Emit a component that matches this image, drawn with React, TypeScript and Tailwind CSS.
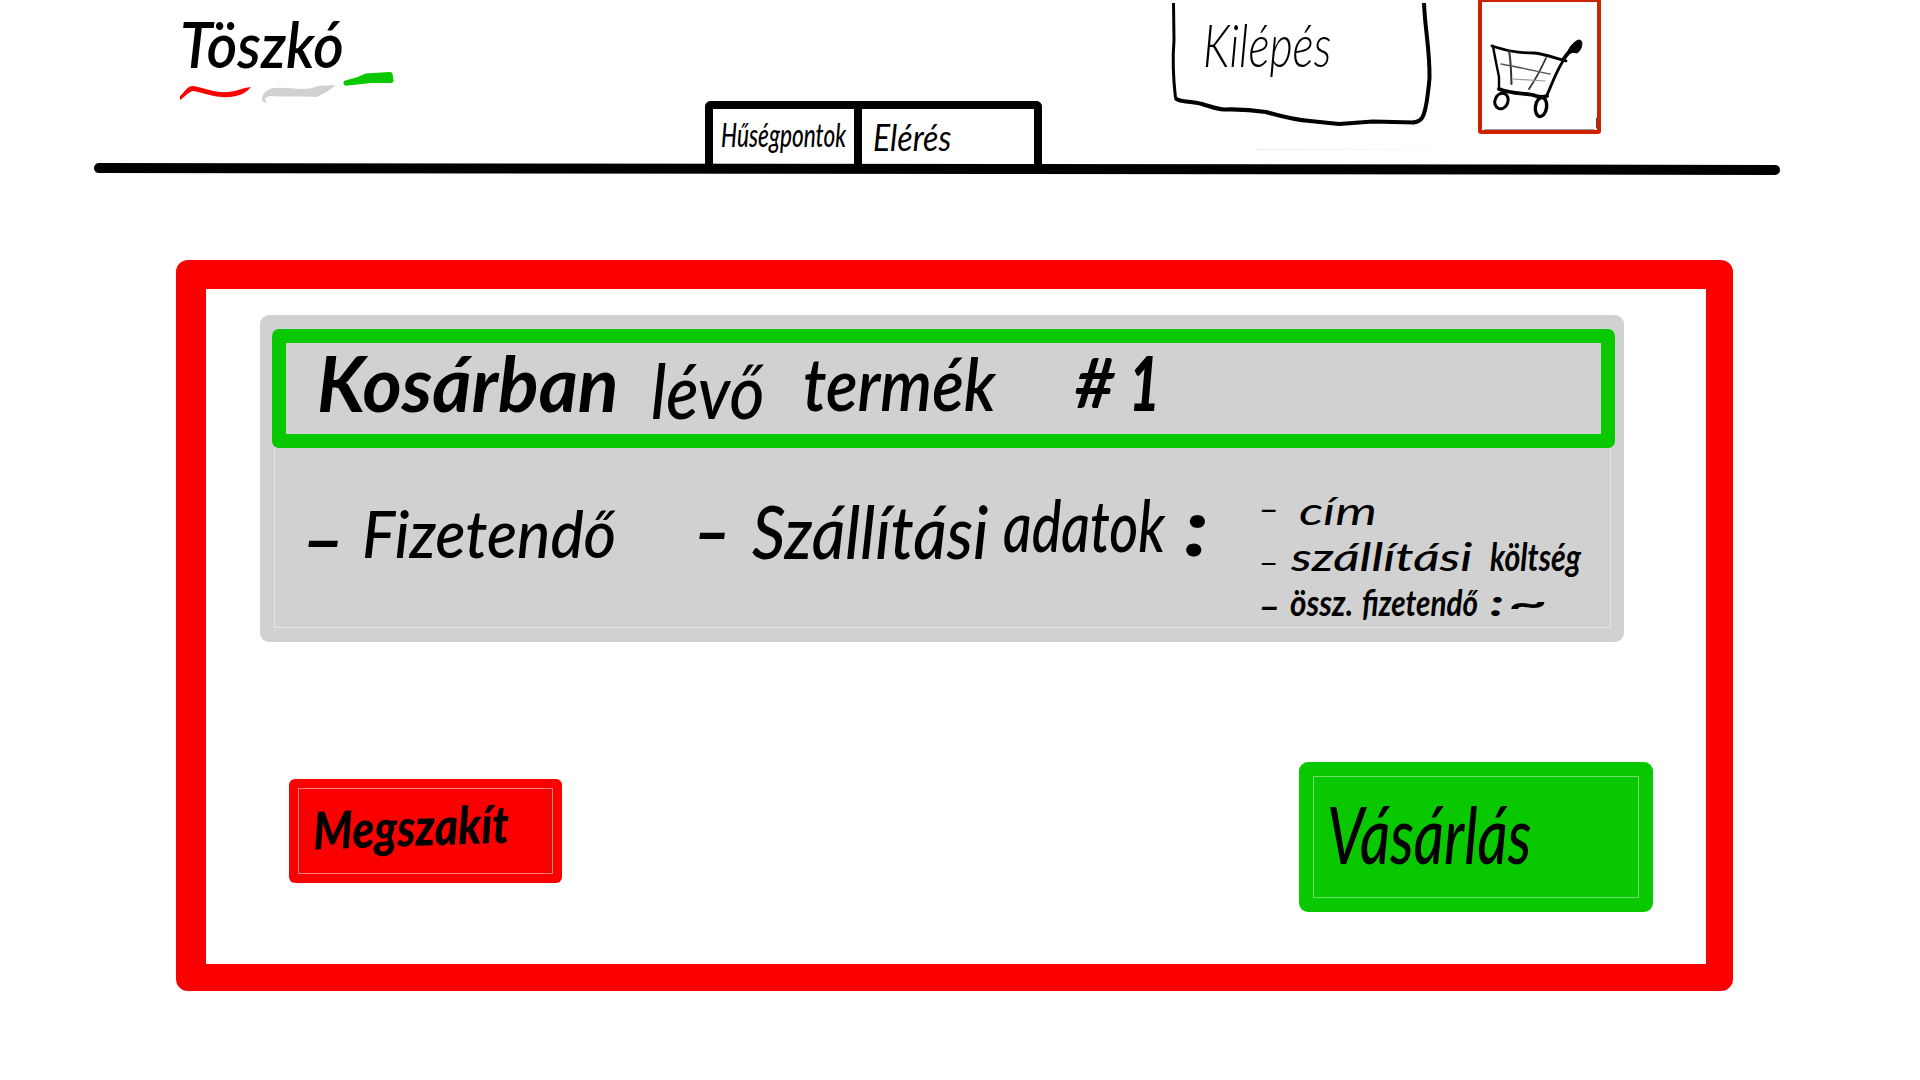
import { useLayoutEffect, useRef, useState } from "react";

/** One inked word, stretched horizontally to fill the width of its slot. */
function Ink({ text, className }: { text: string; className: string }) {
  const slot = useRef<HTMLSpanElement>(null);
  const word = useRef<HTMLSpanElement>(null);
  const [scale, setScale] = useState(1);
  useLayoutEffect(() => {
    if (slot.current && word.current) {
      setScale(slot.current.clientWidth / word.current.offsetWidth);
    }
  }, [text]);
  return (
    <span ref={slot} className={`flex shrink-0 items-start justify-start leading-none whitespace-nowrap ${className}`}>
      <span ref={word} className="block shrink-0 origin-left" style={{ transform: `scaleX(${scale})` }}>
        {text}
      </span>
    </span>
  );
}

function Logo() {
  return (
    <div className="ml-[180px] flex w-[220px] shrink-0 flex-col pt-[12px]">
      <Ink text="Töszkó" className="h-[60px] w-[164px] text-[64px] font-semibold" />
      <svg className="h-[34px] w-[220px]" viewBox="180 72 220 34" fill="none">
        <path d="M180 96 C185 92 187 86 193 86 C205 88 215 93 228 92 C238 91 242 88 251 87 C246 93 240 96 230 97 C215 98 205 93 193 91 C188 92 185 97 180 100Z" fill="#fa0000" />
        <path d="M262 101 C261 95 267 88 275 88 C292 87 304 92 318 86 L335 85 C329 92 322 94 317 97 C300 96 282 97 270 96 C265 97 264 99 267 103Z" fill="#d1d1d1" />
        <path d="M346 83 L357 80 L366 76 L390 74.500 L391 80.500 L371 80.500 L348 83" stroke="#0ac800" strokeWidth="5" strokeLinejoin="round" strokeLinecap="round" fill="#0ac800" />
      </svg>
    </div>
  );
}

function Tabs() {
  return (
    <nav className="mt-[101px] ml-[305px] flex h-[65px] w-[337px] shrink-0 rounded-t-[6px] border-8 border-b-0 border-black">
      <a className="block w-[141px] pt-[10px] pl-[8px]">
        <Ink text="Hűségpontok" className="w-[125px] text-[32px] font-medium" />
      </a>
      <span className="h-full w-2 shrink-0 bg-black" />
      <a className="block flex-1 pt-[9px] pl-[11px]">
        <Ink text="Elérés" className="w-[78px] text-[37px] font-normal" />
      </a>
    </nav>
  );
}

function Exit() {
  return (
    <div className="ml-[128px] w-[308px] shrink-0">
      <div className="grid h-[149px]">
        <svg className="col-start-1 row-start-1 h-[130px] w-[270px]" viewBox="1170 0 270 130" fill="none" stroke="#000" strokeLinecap="butt" strokeLinejoin="round">
          <path d="M1173.500 3 L1174 40 C1172 65 1174 85 1175.500 98" strokeWidth="3" />
          <path d="M1175.500 98 C1178 102 1190 101 1202 104 C1212 107 1216 109 1224 109.500 C1240 109 1253 110 1266 112 C1280 116 1295 120 1310 121 L1339 124 L1373 121.500 L1414 122.500" strokeWidth="4.200" />
          <path d="M1424 3 C1425 30 1430 50 1429.500 78 C1428 95 1426 112 1422 118 Q1419 122 1413 122.500" strokeWidth="4" />
        </svg>
        <div className="col-start-1 row-start-1 pt-[14px] pl-[33px]">
          <Ink text="Kilépés" className="w-[128px] text-[60px] font-light" />
        </div>
      </div>
      <div className="ml-[86px] h-px w-[220px] bg-linear-to-r from-[#ececec] to-white" />
    </div>
  );
}

function Cart() {
  return (
    <button className="h-[134px] w-[123px] shrink-0 rounded-b-[3px] border-4 border-t-2 border-[#cc2200]">
      <svg className="h-[128px] w-[115px]" viewBox="1482 2 115 128" fill="none" stroke="#000" strokeLinecap="round">
        <path d="M1492 46 C1505 50 1515 53 1534 53 C1545 54 1555 58 1566 61" strokeWidth="2.800" />
        <path d="M1493 46 C1495 58 1497 67 1499 77 L1499 89" strokeWidth="2.400" />
        <path d="M1499 89 C1512 94 1524 93 1533 95 C1540 98 1544 97 1547 96" strokeWidth="3.800" />
        <path d="M1547 95 C1552 84 1556 72 1563 61" strokeWidth="2.800" />
        <path d="M1563 60 C1567 54 1570 50 1575 46" strokeWidth="4" />
        <path d="M1569 49 C1572 44 1576 40 1580 40 C1584 42 1581 51 1577 53 C1574 52 1572 52 1569 54Z" fill="#000" strokeWidth="1" />
        <path d="M1509 51 C1511 60 1511 72 1511.500 84" stroke="#333" strokeWidth="2" />
        <path d="M1546 58 C1541 69 1535 80 1529 89" stroke="#333" strokeWidth="1.800" />
        <path d="M1501 64 C1518 67 1535 71 1550 74" stroke="#555" strokeWidth="1.300" />
        <path d="M1513 79 L1545 81" stroke="#999" strokeWidth="1.200" />
        <ellipse cx="1501.500" cy="101" rx="6.500" ry="8" transform="rotate(22 1501.500 101)" strokeWidth="3" />
        <ellipse cx="1541" cy="107" rx="5.600" ry="9.600" transform="rotate(8 1541 107)" strokeWidth="3.400" />
        <path d="M1485 129.800 L1594 129.800" stroke="#333" strokeWidth="0.700" />
        <path d="M1596.600 118 L1596.600 128" strokeWidth="0.800" />
      </svg>
    </button>
  );
}

function CartItem() {
  return (
    <section className="ml-[54px] h-[327px] w-[1364px] rounded-[9px] bg-[#d1d1d1] pt-[14px] pl-[12px]">
      <h1 className="flex h-[119px] w-[1343px] items-start rounded-[7px] border-[14px] border-[#0ac800] pl-[31px]">
        <Ink text="Kosárban" className="mt-[2px] w-[302px] text-[76px] font-bold" />
        <Ink text="lévő" className="mt-[9px] ml-[32px] w-[113px] text-[76px] font-medium" />
        <Ink text="termék" className="mt-[3px] ml-[39px] w-[193px] text-[74px] font-semibold" />
        <Ink text="#" className="mt-[5px] ml-[79px] w-[39px] text-[68px] font-bold" />
        <Ink text="1" className="mt-px ml-[15px] w-[31px] text-[76px] font-black" />
      </h1>
      <div className="ml-[2px] flex h-[180px] w-[1337px] items-start border border-t-0 border-[#e4e4e4] pl-[26px]">
        <Ink text="–" className="mt-[58px] w-[44px] text-[66px] font-black" />
        <Ink text="Fizetendő" className="mt-[52px] ml-[17px] w-[254px] text-[66px] font-medium" />
        <Ink text="–" className="mt-[50px] ml-[77px] w-[38px] text-[66px] font-black" />
        <Ink text="Szállítási" className="mt-[46px] ml-[21px] w-[236px] text-[74px] font-medium" />
        <Ink text="adatok" className="mt-[40px] ml-[15px] w-[162px] text-[72px] font-medium" />
        <Ink text=":" className="mt-[35px] ml-[19px] w-[25px] text-[82px] font-black" />
        <ul className="ml-[49px] flex flex-col pt-[36px]">
          <li className="flex h-[48px] items-start">
            <Ink text="–" className="mt-[9px] w-[22px] text-[32px] font-medium" />
            <Ink text="cím" className="mt-[7px] ml-[19px] w-[78px] text-[38px] font-normal" />
          </li>
          <li className="flex h-[54px] items-start">
            <Ink text="–" className="mt-[14px] w-[22px] text-[32px]" />
            <Ink text="szállítási" className="mt-[5px] ml-[11px] w-[181px] text-[39px] font-medium" />
            <Ink text="költség" className="mt-[5px] ml-[18px] w-[91px] text-[39px] font-bold" />
          </li>
          <li className="flex items-start">
            <Ink text="–" className="mt-[3px] w-[23px] text-[34px] font-black" />
            <Ink text="össz." className="mt-[-2px] ml-[9px] w-[63px] text-[36px] font-bold" />
            <Ink text="fizetendő" className="mt-[-2px] ml-[9px] w-[116px] text-[36px] font-bold" />
            <Ink text=":" className="mt-[-2px] ml-[12px] w-[13px] text-[36px] font-black" />
            <Ink text="~" className="mt-[-2px] ml-[5px] w-[40px] text-[36px] font-bold" />
          </li>
        </ul>
      </div>
    </section>
  );
}

export default function App() {
  return (
    <div className="h-[1080px] w-[1920px] overflow-hidden bg-white font-['Lato','Noto_Sans',sans-serif] text-black italic">
      <header className="h-[260px]">
        <div className="flex h-[164px] items-start">
          <Logo />
          <Tabs />
          <Exit />
          <Cart />
        </div>
        <div className="ml-[94px] h-[10px] w-[1686px] rotate-[0.06deg] rounded-full bg-black" />
      </header>
      <main className="ml-[176px] h-[731px] w-[1557px] rounded-[12px] border-t-[29px] border-r-[27px] border-b-[27px] border-l-[30px] border-[#fa0000] pt-[26px]">
        <CartItem />
        <div className="flex items-start justify-between pt-[120px] pr-[53px] pl-[83px]">
          <button className="mt-[17px] h-[104px] w-[273px] rounded-[6px] bg-[#fa0000] p-[9px]">
            <span className="flex h-full items-start border border-[#ff8080] pt-[11px] pl-[14px]">
              <Ink text="Megszakít" className="w-[196px] -rotate-2 text-[52px] font-black" />
            </span>
          </button>
          <button className="h-[150px] w-[354px] rounded-[9px] bg-[#0ac800] p-[14px]">
            <span className="flex h-full items-start border border-[#6cdf66] pt-[16px] pl-[13px]">
              <Ink text="Vásárlás" className="w-[204px] text-[80px] font-medium" />
            </span>
          </button>
        </div>
      </main>
    </div>
  );
}
